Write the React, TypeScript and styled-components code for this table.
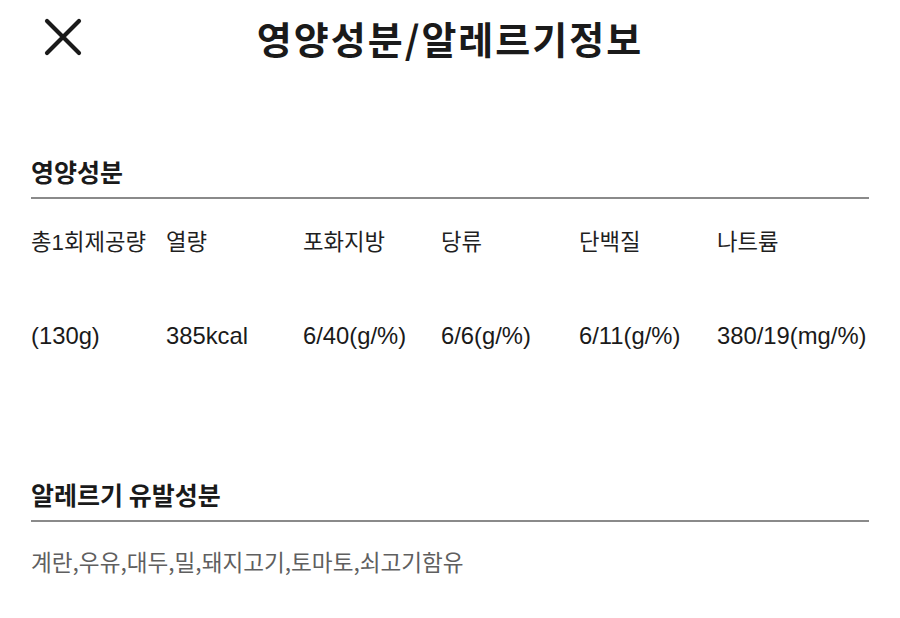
import React from "react";
import styled, { createGlobalStyle } from "styled-components";

const Global = createGlobalStyle`
  html, body { margin: 0; padding: 0; background: #fff; }
  body { font-family: "Liberation Sans", "Noto Sans CJK KR", sans-serif; color: #1a1a1a; }
`;

const Page = styled.div`
  width: 900px;
  height: 618px;
  box-sizing: border-box;
  padding: 0 31px 0 31px;
  overflow: hidden;
`;

const Header = styled.header`
  position: relative;
  height: 76px;
  display: flex;
  align-items: center;
  justify-content: center;
`;

const CloseButton = styled.button`
  position: absolute;
  left: 8px;
  top: 14px;
  width: 48px;
  height: 46px;
  border: 0;
  padding: 0;
  background: transparent;
  display: flex;
  align-items: center;
  justify-content: center;
  cursor: pointer;
`;

const Title = styled.h1`
  margin: 0;
  font-family: "Noto Sans CJK KR", sans-serif;
  font-weight: 700;
  font-size: 38px;
  line-height: 44px;
  color: #1a1a1a;
  letter-spacing: 2px;
`;

const Section = styled.section<{ $top: number }>`
  margin-top: ${(p) => p.$top}px;
`;

const SectionTitle = styled.h2`
  margin: 0;
  font-family: "Noto Sans CJK KR", sans-serif;
  font-weight: 700;
  font-size: 25px;
  line-height: 32px;
  color: #1a1a1a;
`;

const Divider = styled.div`
  margin-top: 10px;
  height: 2px;
  background: #8a8a8a;
`;

const Grid = styled.div`
  display: grid;
  grid-template-columns: 135px 137px 138px 138px 138px 1fr;
  margin-top: 29px;
  row-gap: 63px;
  white-space: nowrap;
`;

const Label = styled.div`
  font-family: "Liberation Sans", "Noto Sans CJK KR", sans-serif;
  font-size: 22.3px;
  line-height: 30px;
  color: #1f1f1f;
`;

const Value = styled.div`
  font-family: "Liberation Sans", "Noto Sans CJK KR", sans-serif;
  font-size: 23.8px;
  line-height: 30px;
  color: #1a1a1a;
`;

const Allergens = styled.p`
  margin: 25px 0 0 0;
  font-family: "Noto Sans CJK KR", sans-serif;
  font-size: 22.6px;
  line-height: 30px;
  color: #5f5f5f;
`;

const labels = ["총1회제공량", "열량", "포화지방", "당류", "단백질", "나트륨"];
const values = ["(130g)", "385kcal", "6/40(g/%)", "6/6(g/%)", "6/11(g/%)", "380/19(mg/%)"];

export default function App() {
  return (
    <Page>
      <Global />
      <Header>
        <CloseButton aria-label="닫기">
          <svg width="40" height="38" viewBox="0 0 40 38">
            <path
              d="M4 3 L36 35 M36 3 L4 35"
              stroke="#1a1a1a"
              strokeWidth="4.2"
              strokeLinecap="round"
              fill="none"
            />
          </svg>
        </CloseButton>
        <Title>영양성분/알레르기정보</Title>
      </Header>

      <Section $top={79}>
        <SectionTitle>영양성분</SectionTitle>
        <Divider />
        <Grid>
          {labels.map((l) => (
            <Label key={l}>{l}</Label>
          ))}
          {values.map((v) => (
            <Value key={v}>{v}</Value>
          ))}
        </Grid>
      </Section>

      <Section $top={127}>
        <SectionTitle>알레르기 유발성분</SectionTitle>
        <Divider />
        <Allergens>계란,우유,대두,밀,돼지고기,토마토,쇠고기함유</Allergens>
      </Section>
    </Page>
  );
}
